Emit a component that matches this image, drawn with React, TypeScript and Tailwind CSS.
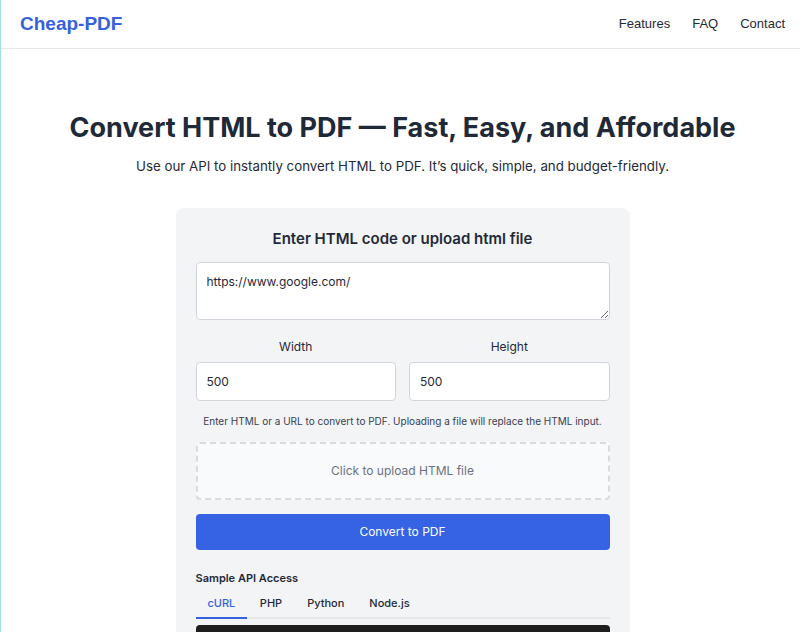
import React from "react";

export default function App() {
  const inter = { fontFamily: "Inter, 'Noto Sans', sans-serif" };
  const arial = { fontFamily: "'Liberation Sans', Arial, sans-serif" };
  return (
    <div className="min-h-[632px] bg-white border-l border-[#9fe0e8] text-[#1f2937]" style={inter}>
      <header className="h-[49px] border-b border-[#e5e7eb] flex items-center justify-between pl-[19px] pr-[15px]">
        <div className="text-[19px] font-bold text-[#3561db]" style={arial}>
          Cheap-PDF
        </div>
        <nav className="flex gap-[22px] text-[13px] text-[#1f2937]" style={arial}>
          <span>Features</span>
          <span>FAQ</span>
          <span>Contact</span>
        </nav>
      </header>
      <main className="flex flex-col items-center pt-[61px] pl-[4px]">
        <h1 className="text-[27px] font-bold text-[#1f2937] leading-[36px]">
          Convert HTML to PDF — Fast, Easy, and Affordable
        </h1>
        <p className="mt-[10px] text-[13.3px] text-[#1f2937] leading-[20px]">
          Use our API to instantly convert HTML to PDF. It’s quick, simple, and budget-friendly.
        </p>
        <div className="mt-[32px] w-[454px] bg-[#f3f4f6] rounded-[8px] px-[20px] pt-[21px] pb-[20px]">
          <h2 className="text-center text-[15px] font-semibold leading-[20px] text-[#1f2937]">
            Enter HTML code or upload html file
          </h2>
          <textarea
            className="mt-[13px] block w-full h-[58px] bg-white border border-[#d1d5db] rounded-[4px] px-[10px] pt-[11px] text-[12px] leading-[16px] text-[#1f2937] outline-none resize-y"
            defaultValue="https://www.google.com/"
          />
          <div className="mt-[19px] grid grid-cols-2 gap-[13px]">
            <div className="flex flex-col items-center">
              <label className="text-[12px] leading-[16px] text-[#1f2937]">Width</label>
              <input className="mt-[7px] w-full h-[39px] bg-white border border-[#d1d5db] rounded-[4px] px-[10px] text-[12px] outline-none" defaultValue="500" />
            </div>
            <div className="flex flex-col items-center">
              <label className="text-[12px] leading-[16px] text-[#1f2937]">Height</label>
              <input className="mt-[7px] w-full h-[39px] bg-white border border-[#d1d5db] rounded-[4px] px-[10px] text-[12px] outline-none" defaultValue="500" />
            </div>
          </div>
          <p className="mt-[13px] text-center text-[10px] leading-[14px] text-[#374151] whitespace-nowrap">
            Enter HTML or a URL to convert to PDF. Uploading a file will replace the HTML input.
          </p>
          <div className="mt-[14px] h-[58px] border-2 border-dashed border-[#d8dbe0] rounded-[4px] bg-[#f9fafb] flex items-center justify-center text-[12px] text-[#6b7280]">
            Click to upload HTML file
          </div>
          <button className="mt-[14px] block w-full h-[36px] bg-[#3563e3] rounded-[4px] text-white text-[12px]">
            Convert to PDF
          </button>
          <div className="mt-[21px] text-[11px] font-semibold leading-[14px] text-[#1f2937]">Sample API Access</div>
          <div className="mt-[11px] flex border-b-2 border-[#e5e7eb] text-[11px] font-medium leading-[14px]">
            <div className="px-[12px] pb-[7px] text-[#3561db] border-b-2 border-[#3561db] -mb-[2px]">cURL</div>
            <div className="px-[12.5px] pb-[7px] text-[#1f2937]">PHP</div>
            <div className="px-[12.5px] pb-[7px] text-[#1f2937]">Python</div>
            <div className="px-[12.5px] pb-[7px] text-[#1f2937]">Node.js</div>
          </div>
          <div className="mt-[6px] h-[120px] bg-[#1e1e1e] rounded-[4px]" />
        </div>
      </main>
    </div>
  );
}
